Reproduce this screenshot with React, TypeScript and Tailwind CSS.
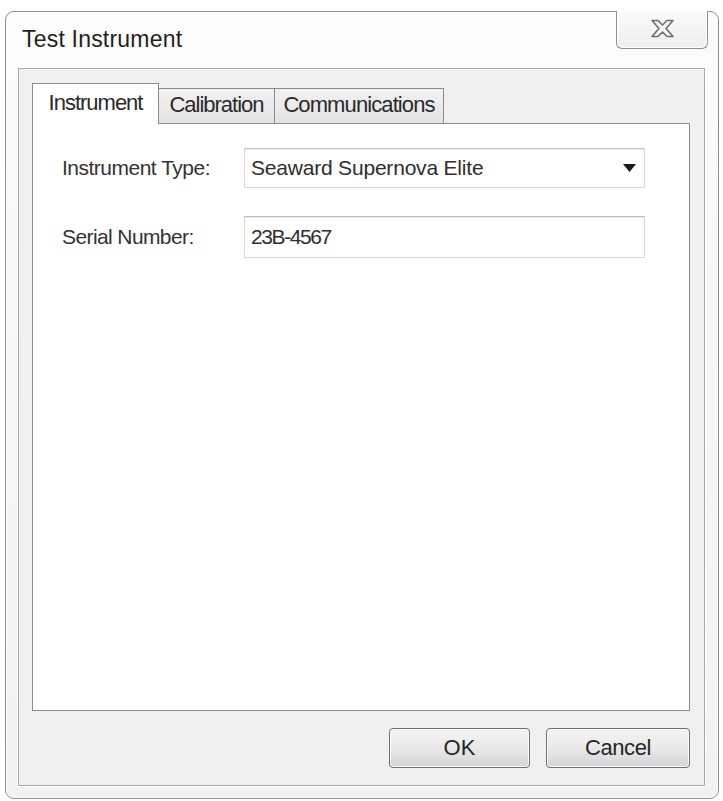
export default function App() {
  return (
    <div className="w-[723px] h-[801px] bg-white pt-[11px] pl-[5px] font-['Liberation_Sans',Arial,sans-serif]">
      <div className="w-[714px] h-[788px] border border-[#8e8e8e] rounded-[9px] bg-gradient-to-b from-[#fcfcfc] via-[#f6f6f6] to-[#f2f2f2] flex flex-col shadow-[inset_0_0_0_1px_#ffffff]">
        {/* Title bar */}
        <div className="h-[56px] shrink-0 flex items-start justify-between">
          <div className="pt-[14px] pl-[16px] text-[23px] leading-[26px] text-[#1f1f1f] tracking-[0.2px]">
            Test Instrument
          </div>
          <div className="-mt-[1px] mr-[10px] w-[92px] h-[38px] border border-t-0 border-[#8f8f8f] rounded-b-[6px] bg-gradient-to-b from-[#fafafa] to-[#eeeeee] shadow-[inset_0_0_0_1px_#ffffff] flex items-center justify-center">
            <svg width="25" height="19" viewBox="0 0 25 19" className="-mt-[2px]">
              <polygon
                points="2,1.5 8,1.5 12.5,6 17,1.5 23,1.5 16,9.5 23,17.5 17,17.5 12.5,13 8,17.5 2,17.5 9,9.5"
                fill="#f4f4f4"
                stroke="#6e6e6e"
                strokeWidth="1.6"
                strokeLinejoin="round"
              />
            </svg>
          </div>
        </div>

        {/* Client frame */}
        <div className="ml-[12px] mb-[12px] w-[687px] flex-1 border border-[#a8a8a8] bg-[#f0f0f0] shadow-[0_0_0_1px_#ffffff] flex flex-col pt-[14px] pl-[13px] pr-[14px]">
          {/* Tabs */}
          <div className="h-[40px] flex items-end shrink-0">
            <div className="relative z-10 w-[127px] h-[41px] -mb-[1px] border border-b-0 border-[#898c95] bg-white flex justify-center pt-[7px] text-[22px] leading-[24px] tracking-[-1px] text-[#2a2a2a]">
              Instrument
            </div>
            <div className="w-[116px] h-[35px] border-t border-r border-[#898c95] bg-gradient-to-b from-[#f2f2f2] to-[#e3e3e3] flex justify-center pt-[4px] text-[22px] leading-[24px] tracking-[-1px] text-[#2a2a2a]">
              Calibration
            </div>
            <div className="w-[169px] h-[35px] border-t border-r border-[#898c95] bg-gradient-to-b from-[#f2f2f2] to-[#e3e3e3] flex justify-center pt-[4px] text-[22px] leading-[24px] tracking-[-0.9px] text-[#2a2a2a]">
              Communications
            </div>
          </div>

          {/* Panel */}
          <div className="h-[588px] shrink-0 border border-[#898c95] bg-white pt-[24px] pl-[29px]">
            <div className="grid grid-cols-[182px_401px] gap-y-[28px] items-center">
              <div className="text-[21px] leading-[24px] tracking-[-0.5px] text-[#333333]">Instrument Type:</div>
              <div className="h-[40px] border border-[#d6d6d6] border-t-[#c4c4c4] bg-white shadow-[inset_0_1px_1px_#ececec] flex items-center justify-between pl-[6px] pr-[8px]">
                <span className="text-[21px] leading-[24px] tracking-[-0.2px] text-[#2e2e2e]">Seaward Supernova Elite</span>
                <svg width="13" height="8" viewBox="0 0 13 8">
                  <polygon points="0,0 13,0 6.5,8" fill="#1a1a1a" />
                </svg>
              </div>
              <div className="text-[21px] leading-[24px] tracking-[-0.6px] text-[#333333]">Serial Number:</div>
              <div className="h-[42px] border border-[#d6d6d6] border-t-[#bdbdbd] bg-white shadow-[inset_0_1px_1px_#ececec] flex items-center pl-[6px]">
                <span className="text-[21px] leading-[24px] tracking-[-1.4px] text-[#2e2e2e]">23B-4567</span>
              </div>
            </div>
          </div>

          {/* Buttons */}
          <div className="mt-[17px] flex justify-end gap-[16px]">
            <div className="w-[141px] h-[40px] border border-[#707070] rounded-[4px] bg-gradient-to-b from-[#f4f4f4] via-[#e9e9e9] to-[#d4d4d4] shadow-[inset_0_0_0_1px_#fbfbfb] flex items-center justify-center text-[22px] leading-[24px] text-[#262626]">
              OK
            </div>
            <div className="w-[144px] h-[40px] border border-[#707070] rounded-[4px] bg-gradient-to-b from-[#f4f4f4] via-[#e9e9e9] to-[#d4d4d4] shadow-[inset_0_0_0_1px_#fbfbfb] flex items-center justify-center text-[22px] leading-[24px] tracking-[-0.4px] text-[#262626]">
              Cancel
            </div>
          </div>
        </div>
      </div>
    </div>
  );
}
